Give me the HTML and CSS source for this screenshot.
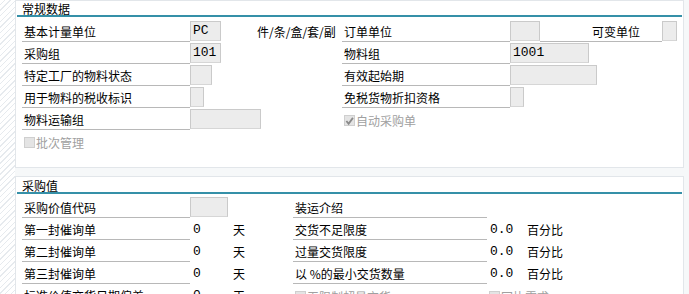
FILE: index.html
```html
<!DOCTYPE html>
<html lang="zh">

<head>
    <meta charset="UTF-8">
    <title>物料主数据 - 采购</title>
    <link rel="stylesheet" href="styles.css">
</head>

<body>
    <div class="page">
        <div class="strip"></div>
        <div class="main">

            <div class="panel">
                <div class="head">常规数据</div>
                <div class="grid general">
                    <div class="lbl">基本计量单位</div>
                    <div class="cell"><span class="fld val w31">PC</span></div>
                    <div class="txt">件/条/盒/套/副</div>
                    <div class="lbl">订单单位</div>
                    <div class="cell"><span class="fld w30"></span></div>
                    <div class="lbl far">可变单位</div>
                    <div class="cell"><span class="fld w15"></span></div>

                    <div class="lbl">采购组</div>
                    <div class="cell"><span class="fld val w31">101</span></div>
                    <div class="txt"></div>
                    <div class="lbl">物料组</div>
                    <div class="cell span3"><span class="fld val w79">1001</span></div>

                    <div class="lbl">特定工厂的物料状态</div>
                    <div class="cell"><span class="fld w22"></span></div>
                    <div class="txt"></div>
                    <div class="lbl">有效起始期</div>
                    <div class="cell span3"><span class="fld w87"></span></div>

                    <div class="lbl">用于物料的税收标识</div>
                    <div class="cell"><span class="fld w14"></span></div>
                    <div class="txt"></div>
                    <div class="lbl">免税货物折扣资格</div>
                    <div class="cell span3"><span class="fld w14"></span></div>

                    <div class="lbl">物料运输组</div>
                    <div class="cell span2"><span class="fld w71"></span></div>
                    <div class="chk span4">
                        <span class="box"><svg width="10" height="10" viewBox="0 0 10 10"><path d="M1.5 5 L4 8 L8.8 1.5" fill="none" stroke="#8a8a8a" stroke-width="2"/></svg></span>自动采购单
                    </div>

                    <div class="chk span7"><span class="box"></span>批次管理</div>
                </div>
            </div>

            <div class="panel second">
                <div class="head">采购值</div>
                <div class="grid purch">
                    <div class="lbl">采购价值代码</div>
                    <div class="cell span2"><span class="fld w38"></span></div>
                    <div class="lbl">装运介绍</div>
                    <div class="num"></div>
                    <div class="txt"></div>

                    <div class="lbl">第一封催询单</div>
                    <div class="num">0</div>
                    <div class="txt">天</div>
                    <div class="lbl">交货不足限度</div>
                    <div class="num">0.0</div>
                    <div class="txt">百分比</div>

                    <div class="lbl">第二封催询单</div>
                    <div class="num">0</div>
                    <div class="txt">天</div>
                    <div class="lbl">过量交货限度</div>
                    <div class="num">0.0</div>
                    <div class="txt">百分比</div>

                    <div class="lbl">第三封催询单</div>
                    <div class="num">0</div>
                    <div class="txt">天</div>
                    <div class="lbl">以 %的最小交货数量</div>
                    <div class="num">0.0</div>
                    <div class="txt">百分比</div>

                    <div class="lbl">标准价值交货日期偏差</div>
                    <div class="num">0</div>
                    <div class="txt">天</div>
                    <div class="chk"><span class="box"></span>无限制超量交货</div>
                    <div class="chk span2"><span class="box"></span>回执需求</div>
                </div>
            </div>

        </div>
    </div>
</body>

</html>
```

FILE: styles.css
```css
* {
    margin: 0;
    padding: 0;
    box-sizing: border-box;
}

body {
    background: #f6f8f9;
    font-family: "Noto Sans CJK SC", "Noto Sans", sans-serif;
    font-size: 12px;
    color: #000;
    overflow: hidden;
}

.page {
    display: flex;
    height: 294px;
}

.strip {
    width: 15px;
    flex: none;
    background: repeating-linear-gradient(135deg, #ffffff 0 3px, #e6eaee 3px 4px);
}

.main {
    flex: 1;
    padding-right: 5px;
}

.panel {
    background: #fff;
    border: 1px solid #e2e6ea;
    height: 168px;
    padding: 0 1px;
}

.panel.second {
    margin-top: 8px;
    height: 200px;
}

.head {
    height: 16px;
    line-height: 16px;
    padding-left: 5px;
    border-bottom: 2px solid #3590a8;
}

.second .head {
    height: 17px;
    line-height: 18px;
}

.grid {
    display: grid;
    grid-auto-rows: 22px;
    align-items: end;
    padding: 3px 0 0 5px;
}

.general {
    grid-template-columns: 168px 67px 85px 168px 30px 122px 15px;
}

.purch {
    grid-template-columns: 168px 43px 60px 194px 40px 100px;
}

.second .grid {
    padding-top: 2px;
}

.lbl {
    height: 22px;
    line-height: 20px;
    padding: 2px 0 0 2px;
    border-bottom: 1px solid #b8b8b8;
    white-space: nowrap;
}

.lbl.far {
    padding-left: 52px;
}

.txt,
.num {
    height: 22px;
    line-height: 20px;
    padding-top: 2px;
    white-space: nowrap;
}

.num {
    font-family: "Liberation Mono", monospace;
    font-size: 13px;
    padding-left: 3px;
}

.cell {
    height: 22px;
    display: flex;
    align-items: flex-end;
}

.span2 { grid-column: span 2; }
.span3 { grid-column: span 3; }
.span4 { grid-column: span 4; }
.span7 { grid-column: span 7; }

.fld {
    display: block;
    height: 20px;
    background: #ececec;
    border: 1px solid #cacaca;
    border-bottom-color: #d6d6d6;
    line-height: 18px;
    padding-left: 2px;
    margin-bottom: 1px;
}

.val {
    font-family: "Liberation Mono", monospace;
    font-size: 13px;
}

.w14 { width: 14px; }
.w15 { width: 15px; }
.w22 { width: 22px; }
.w30 { width: 30px; }
.w31 { width: 31px; }
.w38 { width: 38px; }
.w71 { width: 71px; }
.w79 { width: 79px; }
.w87 { width: 87px; }

.chk {
    height: 22px;
    display: flex;
    align-items: center;
    padding: 3px 0 0 2px;
    color: #a0a0a0;
    white-space: nowrap;
}

.box {
    width: 11px;
    height: 11px;
    border: 1px solid #cfcfcf;
    background: #e4e4e4;
    margin-right: 1px;
    display: flex;
    align-items: center;
    justify-content: center;
}
```
